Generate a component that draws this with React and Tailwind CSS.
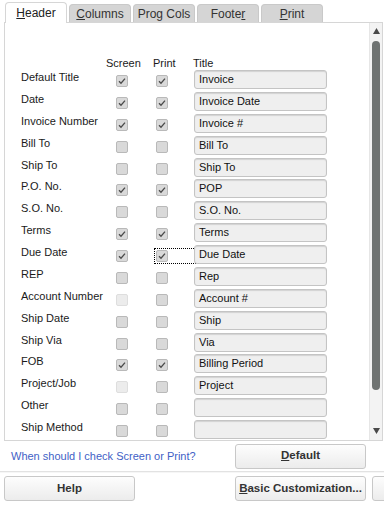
import React from 'react'

const font = { fontFamily: '"Liberation Sans", Arial, sans-serif' }

const rows = [
  { label: 'Default Title', s: true, p: true, title: 'Invoice' },
  { label: 'Date', s: true, p: true, title: 'Invoice Date' },
  { label: 'Invoice Number', s: true, p: true, title: 'Invoice #' },
  { label: 'Bill To', s: false, p: false, title: 'Bill To' },
  { label: 'Ship To', s: false, p: false, title: 'Ship To' },
  { label: 'P.O. No.', s: true, p: true, title: 'POP' },
  { label: 'S.O. No.', s: false, p: false, title: 'S.O. No.' },
  { label: 'Terms', s: true, p: true, title: 'Terms' },
  { label: 'Due Date', s: true, p: true, title: 'Due Date', focus: true },
  { label: 'REP', s: false, p: false, title: 'Rep' },
  { label: 'Account Number', s: false, p: false, title: 'Account #', sDisabled: true },
  { label: 'Ship Date', s: false, p: false, title: 'Ship' },
  { label: 'Ship Via', s: false, p: false, title: 'Via' },
  { label: 'FOB', s: true, p: true, title: 'Billing Period' },
  { label: 'Project/Job', s: false, p: false, title: 'Project', sDisabled: true },
  { label: 'Other', s: false, p: false, title: '' },
  { label: 'Ship Method', s: false, p: false, title: '' },
]

const tabs = [
  { pre: '', u: 'H', post: 'eader', active: true },
  { pre: '', u: 'C', post: 'olumns' },
  { pre: 'Pro', u: 'g', post: ' Cols' },
  { pre: 'Foote', u: 'r', post: '' },
  { pre: '', u: 'P', post: 'rint' },
]

const Check = ({ checked, disabled, focus }) => (
  <div className={focus ? 'outline outline-1 outline-dotted outline-black outline-offset-[1px]' : ''}>
    <div
      className={
        'w-[12px] h-[12px] rounded-[2px] border flex items-center justify-center ' +
        (disabled ? 'bg-[#ececec] border-[#dedede]' : 'bg-[#d9d9d9] border-[#b9b9b9]')
      }
    >
      {checked && (
        <svg width="8" height="8" viewBox="0 0 8 8">
          <path d="M1 4.2 L3 6.2 L7 1.6" fill="none" stroke="#4a4a4a" strokeWidth="1.3" />
        </svg>
      )}
    </div>
  </div>
)

const Button = ({ children }) => (
  <button className="shrink-0 w-[131px] h-[25px] rounded-[3px] border border-[#c8c8c8] bg-gradient-to-b from-[#fdfdfd] to-[#ececec] text-[11.5px] font-bold text-[#333] whitespace-nowrap">
    {children}
  </button>
)

export default function App() {
  return (
    <div className="w-[384px] h-[507px] bg-white overflow-hidden text-[#1a1a1a]" style={font}>
      {/* tabs */}
      <div className="flex gap-[2px] pl-[5px] pt-[2px] h-[22px] items-end">
        {tabs.map((t, i) => (
          <div
            key={i}
            className={
              'w-[62px] flex justify-center items-center text-[12px] rounded-t-[4px] border border-b-0 ' +
              (t.active
                ? 'h-[21px] bg-white border-[#d6d6d6] relative z-10 -mb-[1px] text-[#222]'
                : 'h-[18px] bg-[#d5d5d5] border-[#c9c9c9] text-[#333]')
            }
          >
            <span>
              {t.pre}
              <span className="underline">{t.u}</span>
              {t.post}
            </span>
          </div>
        ))}
      </div>

      {/* panel */}
      <div className="ml-[4px] w-[379px] h-[419px] border border-[#d6d6d6] flex">
        <div className="flex-1 pt-[33px]">
          <div className="flex text-[11px] h-[14px] leading-[14px]">
            <div className="w-[101px]" />
            <div className="w-[47px]">Screen</div>
            <div className="w-[40px]">Print</div>
            <div>Title</div>
          </div>
          <div>
            {rows.map((r, i) => (
              <div key={i} className="flex h-[21.875px] pl-[16px]">
                <div className="w-[95px] text-[11px] leading-[14px]">{r.label}</div>
                <div className="w-[40px] pt-[5px]">
                  <Check checked={r.s} disabled={r.sDisabled} />
                </div>
                <div className="w-[38px] pt-[5px]">
                  <Check checked={r.p} focus={r.focus} />
                </div>
                <div className="w-[133px] h-[19px] rounded-[3px] border border-[#c4c4c4] bg-[#efefef] shadow-[inset_0_1px_1px_rgba(0,0,0,0.12)] text-[11px] leading-[17px] pl-[4px] text-[#111]">
                  {r.title}
                </div>
              </div>
            ))}
          </div>
        </div>
        {/* scrollbar */}
        <div className="w-[13px] border-l border-[#e6e6e6] bg-[#f3f3f3] flex flex-col items-center">
          <svg width="9" height="8" viewBox="0 0 9 8" className="mt-[4px]">
            <path d="M4.5 1 L8 7 L1 7 Z" fill="#4a4a4a" />
          </svg>
          <div className="mt-[6px] w-[8px] h-[349px] rounded-[4px] bg-[#6f7372]" />
          <div className="flex-1" />
          <svg width="9" height="8" viewBox="0 0 9 8" className="mb-[5px]">
            <path d="M1 1 L8 1 L4.5 7 Z" fill="#4a4a4a" />
          </svg>
        </div>
      </div>

      {/* link + default */}
      <div className="flex items-center h-[28px] pt-[2px]">
        <div className="w-[235px] shrink-0 pl-[11px] text-[11px] text-[#3f5fc6]">When should I check Screen or Print?</div>
        <Button>
          <span className="underline">D</span>efault
        </Button>
      </div>

      <div className="mt-[2px] h-[2px] border-t border-[#e2e2e2] bg-[#f6f6f6]" />

      <div className="flex pt-[3px] pl-[4px]">
        <Button>Help</Button>
        <div className="w-[100px] shrink-0" />
        <Button>
          <span className="underline">B</span>asic Customization...
        </Button>
        <div className="ml-[6px] shrink-0">
          <Button> </Button>
        </div>
      </div>
    </div>
  )
}
